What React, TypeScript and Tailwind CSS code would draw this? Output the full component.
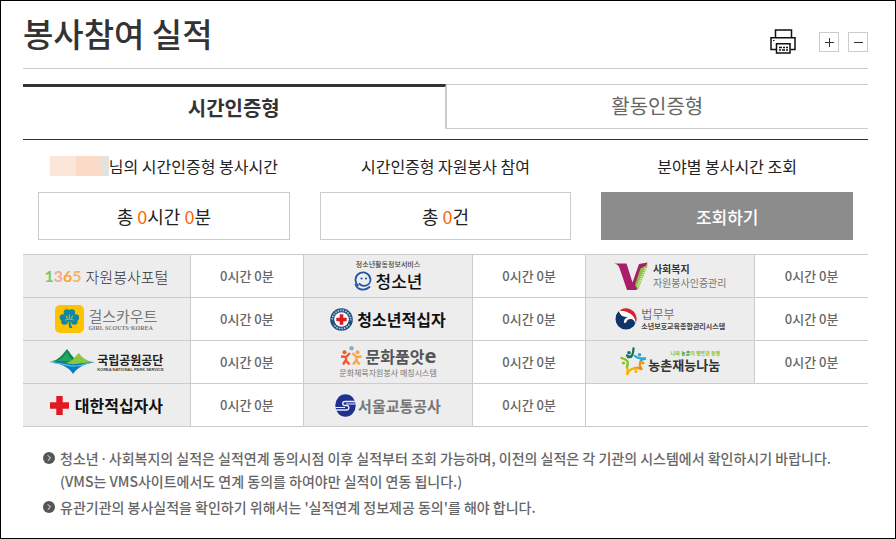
import type { ReactNode } from 'react';

function PrinterIcon() {
  return (
    <svg width="26" height="25" viewBox="0 0 26 25" fill="none" stroke="#111" strokeWidth="1.5" aria-hidden="true">
      <path d="M5.500 8.500V1h16v7.500" />
      <path d="M6 20.500H1V8.700h24v11.800h-4.500" />
      <path d="M6.500 14.700h13.500v9.300H6.500z" />
      <path d="M9 18.500h3M13 18.500h2M16 18.500h2M9 21h2M12 21h3M16 21h2" strokeWidth="1.300" />
      <path d="M3 11.500h1.500" strokeWidth="1.200" />
    </svg>
  );
}

function Portal1365() {
  return (
    <div className="flex items-center gap-1">
      <span className="flex font-['Lato','Noto_Sans_CJK_KR',sans-serif] text-[16px] leading-none font-bold">
        <span className="text-[#7cc85a]">1</span>
        <span className="text-[#f5a98c]">3</span>
        <span className="text-[#f8a53c]">6</span>
        <span className="text-[#f8b070]">5</span>
      </span>
      <span className="text-[15px] leading-none font-light text-[#333]">자원봉사포털</span>
    </div>
  );
}

function GirlScouts() {
  return (
    <div className="flex items-center gap-1">
      <svg width="29" height="28" viewBox="0 0 29 28" aria-hidden="true">
        <rect width="29" height="28" rx="5" fill="#fdc300" />
        <g fill="#0d87a3">
          <circle cx="12" cy="7.500" r="3.300" />
          <circle cx="16.800" cy="7.500" r="3.300" />
          <path d="M11 8h7l-3 8h-1z" />
          <circle cx="8" cy="12.500" r="3.300" />
          <circle cx="9.500" cy="16.500" r="3.300" />
          <circle cx="20.800" cy="12.500" r="3.300" />
          <circle cx="19.300" cy="16.500" r="3.300" />
          <path d="M8 11l6.500 3.500L21 11l-1 8-5.500-3L9 19z" />
          <path d="M13.700 15h1.700c0 3 .6 5.500 2.100 8h-3c-1-2.300-1-5-.8-8z" />
        </g>
        <path d="M14.400 14V9.500M14.400 14l-4.300 1M14.400 14l4.300 1" stroke="#fdc300" strokeWidth=".8" />
      </svg>
      <span className="flex flex-col items-start">
        <span className="text-[15px] leading-[18px] text-[#777]">걸스카우트</span>
        <span className="font-['Liberation_Serif',serif] text-[6px] leading-[7px] font-bold text-[#777]">GIRL SCOUTS·KOREA</span>
      </span>
    </div>
  );
}

function NationalPark() {
  return (
    <div className="flex items-center gap-0.5">
      <svg width="46" height="26" viewBox="0 0 46 26" aria-hidden="true">
        <path d="M3 12C10 11 14 5 18 0c3 4 5 7 8 10l-7 5z" fill="#078b4d" />
        <path d="M7 12c6-1 8-6 11-9 2 5 4 7 7 9z" fill="#27a568" />
        <path d="M15 14c8 0 11-7 15-10 3 5 8 8 15 9-9 3-20 4-30 1z" fill="#8cc63f" />
        <path d="M0 13c12-2 18 3 27 2 7-1 12-2 19-2-11 2-17 5-22 12-4-7-13-11-24-12z" fill="#087dbb" />
        <path d="M5 14c10 0 15 4 22 3 5 0 9-2 13-3" fill="none" stroke="#55c2df" strokeWidth="1.200" />
      </svg>
      <span className="flex flex-col items-start">
        <span className="text-[12px] leading-[15px] font-bold text-[#222]">국립공원공단</span>
        <span className="font-['Liberation_Sans',sans-serif] text-[4px] leading-[6px] font-bold text-[#444]">KOREA NATIONAL PARK SERVICE</span>
      </span>
    </div>
  );
}

function RedCross() {
  return (
    <div className="flex items-center gap-1.5">
      <svg width="19" height="19" viewBox="0 0 19 19" aria-hidden="true">
        <path d="M6.300 0h6.400v6.300H19v6.400h-6.300V19H6.300v-6.300H0V6.300h6.300z" fill="#e01a22" />
      </svg>
      <span className="text-[16px] leading-none font-bold text-[#111]">대한적십자사</span>
    </div>
  );
}

function Youth() {
  return (
    <div className="flex flex-col items-center">
      <span className="text-[7px] leading-[10px] font-medium text-[#444]">청소년활동정보서비스</span>
      <span className="flex items-center gap-1">
        <svg width="18" height="20" viewBox="0 0 18 20" fill="none" stroke="#2456a8" aria-hidden="true">
          <path d="M4 14.500A7.500 7.500 0 1 1 16.500 8.500c0 3.500-2.500 6-6 6.300-2.500.2-4-.8-5-2" strokeWidth="1.800" strokeLinecap="round" />
          <path d="M1.500 13.500c2 5.500 9 7 14 2.500" strokeWidth="1.800" strokeLinecap="round" />
          <circle cx="7.500" cy="7.500" r="1.100" fill="#2456a8" stroke="none" />
          <circle cx="12" cy="7.500" r="1.100" fill="#2456a8" stroke="none" />
        </svg>
        <span className="text-[17px] leading-6 font-medium text-[#111]">청소년</span>
      </span>
    </div>
  );
}

function YouthRedCross() {
  return (
    <div className="flex items-center gap-1">
      <svg width="23" height="23" viewBox="0 0 23 23" aria-hidden="true">
        <circle cx="11.500" cy="11.500" r="11.300" fill="#1b4f7f" />
        <circle cx="11.500" cy="11.500" r="9.200" fill="none" stroke="#b9cbdc" strokeWidth="1.700" strokeDasharray="1.500 1.100" />
        <path d="M2 12.500l1.300 4M21 12.500l-1.300 4" stroke="#1b4f7f" strokeWidth="3" />
        <circle cx="11.500" cy="11.500" r="7.300" fill="#fff" />
        <path d="M9.700 6.300h3.600v3.400h3.400v3.600h-3.400v3.400H9.700v-3.400H6.300V9.700h3.400z" fill="#e01a22" />
      </svg>
      <span className="text-[16px] leading-none font-bold text-[#111]">청소년적십자</span>
    </div>
  );
}

function CultureExchange() {
  return (
    <div className="flex flex-col items-center">
      <span className="flex items-center gap-1">
        <svg width="22" height="20" viewBox="0 0 22 20" aria-hidden="true">
          <circle cx="11.500" cy="2.300" r="2.200" fill="#7fb2c8" />
          <circle cx="4.500" cy="6.300" r="2" fill="#ee5a2b" />
          <circle cx="17.500" cy="6.300" r="2" fill="#f9a73e" />
          <path d="M1 10.500l5 .5 4-4M6 11.500v3l3.500 4M6 14l-3 4.500" fill="none" stroke="#ee5a2b" strokeWidth="2.400" />
          <path d="M21.500 10.500l-5 .5-4-4M16.500 11.500v3l3 4M16.500 14l-3.500 4.500" fill="none" stroke="#f9a73e" strokeWidth="2.400" />
        </svg>
        <span className="flex items-center text-[16px] leading-[22px] font-bold text-[#555]">
          문화품앗
          <span className="font-['Noto_Sans',sans-serif] text-[20px] leading-5 font-bold">e</span>
        </span>
      </span>
      <span className="text-[8px] leading-3 text-[#777]">문화체육자원봉사 매칭시스템</span>
    </div>
  );
}

function SeoulMetro() {
  return (
    <div className="flex items-center gap-0.5">
      <svg width="21" height="23" viewBox="0 0 21 23" aria-hidden="true">
        <ellipse cx="10.500" cy="11.500" rx="10.200" ry="11.200" fill="#1f3190" />
        <path d="M20.500 7.500H10c-3 0-3 4 0 4h2c2.500 0 2.500 4.500-.5 4.500H.8" fill="none" stroke="#ededed" strokeWidth="1.400" />
        <path d="M20.500 10H11M10 13.500H.5" stroke="#ededed" strokeWidth="1" />
      </svg>
      <span className="text-[15px] leading-none font-bold text-[#777]">서울교통공사</span>
    </div>
  );
}

function SocialWelfare() {
  return (
    <div className="flex items-center gap-1">
      <svg width="35" height="29" viewBox="0 0 35 29" aria-hidden="true">
        <path d="M0 1.500h12.500l6 19L25 2l8.500-1.500L22.500 28H13L5.500 6C4.500 3.500 3 2 0 1.500z" fill="#a81e6b" />
        <path d="M26.500 6.500L34 2.500 24 28l-3-5z" fill="#8cc63f" />
        <path d="M31.500 6L23.500 25" stroke="#d9edb8" strokeWidth="2" strokeDasharray="1.200 1" />
      </svg>
      <span className="flex flex-col items-start text-[10px] leading-[14px]">
        <span className="font-bold text-[#333]">사회복지</span>
        <span className="text-[#777]">자원봉사인증관리</span>
      </span>
    </div>
  );
}

function JusticeMinistry() {
  return (
    <div className="flex items-center gap-1">
      <svg width="22" height="22" viewBox="0 0 22 22" aria-hidden="true">
        <circle cx="11" cy="11" r="10.500" fill="#0f3568" />
        <path d="M3.500 3.600A10.500 10.500 0 0 1 21.500 11c0 2-.5 3.800-1.400 5.300 0-4.500-4-6.300-7-4.800-1.500.8-1 3-3 3.500C5.500 15.500 8 8 3.500 3.600z" fill="#fff" />
        <path d="M4.500 2.700A10.500 10.500 0 0 1 21.500 11c0 1.600-.3 3-.9 4.300C21 7.500 13 2.500 4.500 2.700z" fill="#d8232f" />
        <path d="M1 8.500C2 5.500 2.800 4.300 3.800 3.500c1.500 4.500 5 5.500 9.200 5.500-3 1-4.500 3-4 6.500z" fill="#0f3568" />
      </svg>
      <span className="flex flex-col items-start">
        <span className="text-[12px] leading-[14px] font-light text-[#333]">법무부</span>
        <span className="text-[7px] leading-[10px] font-bold text-[#444]">소년보호교육종합관리시스템</span>
      </span>
    </div>
  );
}

function RuralTalent() {
  return (
    <div className="flex items-center">
      <svg width="28" height="30" viewBox="0 0 28 30" fill="none" strokeLinecap="round" aria-hidden="true">
        <path d="M7 8.500c3 2.500 6 1.500 6.500-7M12.500 8c-1 2-2 2.500-4.500 2" stroke="#14735c" strokeWidth="2.300" />
        <circle cx="9" cy="5.700" r="1.800" fill="#14735c" />
        <path d="M15 9c3 3 7 2.500 11 2.500-3.500.5-5 1.500-5.500 3" stroke="#28a9d8" strokeWidth="2.300" />
        <circle cx="19.500" cy="7.800" r="1.800" fill="#28a9d8" />
        <path d="M21 14.500c-2 2-2 4 1 8-3-2-5-2.500-8-1" stroke="#f08c1e" strokeWidth="2.300" />
        <circle cx="23" cy="16" r="1.500" fill="#f08c1e" />
        <path d="M16 21.500c-4-.5-7 1-9 6.500 1-3.500 1-5.500 0-8" stroke="#f5b400" strokeWidth="2.300" />
        <circle cx="16" cy="24.500" r="1.500" fill="#f5b400" />
        <path d="M1.500 11c6 1.500 7.500 3.500 5.500 9" stroke="#8cc220" strokeWidth="2.300" />
        <circle cx="3.500" cy="16" r="1.600" fill="#8cc220" />
      </svg>
      <span className="flex flex-col items-end pb-0.5">
        <span className="text-[5px] leading-[7px] font-bold text-[#8cc220]">
          나와 <span className="text-[#259b4b]">농촌</span>의 행복한 동행
        </span>
        <span className="text-[13px] leading-[18px] font-bold text-[#333]">농촌재능나눔</span>
      </span>
    </div>
  );
}

const rows: ReactNode[][] = [
  [<Portal1365 />, <Youth />, <SocialWelfare />],
  [<GirlScouts />, <YouthRedCross />, <JusticeMinistry />],
  [<NationalPark />, <CultureExchange />, <RuralTalent />],
  [<RedCross />, <SeoulMetro />],
];

function Bullet() {
  return (
    <svg className="mt-[5px] shrink-0" width="12" height="12" viewBox="0 0 12 12" aria-hidden="true">
      <circle cx="6" cy="6" r="6" fill="#555" />
      <path d="M4.800 3.300L7.500 6 4.800 8.700" fill="none" stroke="#fff" />
    </svg>
  );
}

function Summary({ title, children }: { title: ReactNode; children: ReactNode }) {
  return (
    <div className="px-[15px]">
      <h2 className="flex h-5 items-center justify-center text-[16px] leading-5 whitespace-nowrap text-[#222]">{title}</h2>
      <div className="mt-4 h-12">{children}</div>
    </div>
  );
}

function TotalBox({ children }: { children: ReactNode }) {
  return (
    <p className="flex h-full items-center justify-center border border-[#ccc] text-[18px] leading-none whitespace-pre text-[#222]">
      {children}
    </p>
  );
}

const zoomButton = 'flex size-5 items-center justify-center border border-[#ccc]';

export default function App() {
  return (
    <main className="min-h-screen border border-black bg-white pr-[27px] pl-[22px] font-['Noto_Sans_CJK_KR',sans-serif] text-[#333]">
      <header className="flex h-[68px] items-center justify-between border-b border-[#ccc]">
        <h1 className="pb-0.5 text-[33px] leading-none font-medium">봉사참여 실적</h1>
        <div className="flex items-center pt-3.5">
          <button type="button" aria-label="인쇄" className="mr-[23px]">
            <PrinterIcon />
          </button>
          <button type="button" aria-label="확대" className={`${zoomButton} mr-[9px]`}>
            <svg width="10" height="10" viewBox="0 0 10 10" stroke="#333" shapeRendering="crispEdges" aria-hidden="true">
              <path d="M1 5.500h9M5.500 1v9" />
            </svg>
          </button>
          <button type="button" aria-label="축소" className={zoomButton}>
            <svg width="10" height="10" viewBox="0 0 10 10" stroke="#333" shapeRendering="crispEdges" aria-hidden="true">
              <path d="M1 5.500h9" />
            </svg>
          </button>
        </div>
      </header>

      <div role="tablist" className="mt-[15px] grid h-[45px] grid-cols-2 text-[20px] leading-none">
        <button type="button" role="tab" aria-selected="true" className="border-t-3 border-r border-t-[#333] border-r-[#ccc] font-bold">
          시간인증형
        </button>
        <button
          type="button"
          role="tab"
          aria-selected="false"
          className="border border-r-0 border-[#ccc] pb-0.5 text-[#666]"
        >
          활동인증형
        </button>
      </div>

      <section className="mt-2.5 grid grid-cols-3 border-t border-[#333] pt-4">
        <Summary
          title={
            <>
              <span className="flex h-5" aria-hidden="true">
                <span className="w-[26px] bg-[#fce6d9]" />
                <span className="w-[26px] bg-[#fbdbc7]" />
                <span className="w-[7px] bg-[#e4e2df]" />
              </span>
              님의 시간인증형 봉사시간
            </>
          }
        >
          <TotalBox>
            총 <span className="text-[#f60]">0</span>시간 <span className="text-[#f60]">0</span>분
          </TotalBox>
        </Summary>
        <Summary title="시간인증형 자원봉사 참여">
          <TotalBox>
            총 <span className="text-[#f60]">0</span>건
          </TotalBox>
        </Summary>
        <Summary title="분야별 봉사시간 조회">
          <button type="button" className="h-full w-full bg-[#8c8c8c] text-[17px] leading-none font-medium text-white">
            조회하기
          </button>
        </Summary>
      </section>

      <table className="mt-3.5 w-full table-fixed border-collapse border-y border-[#ccc]">
        <colgroup>
          <col className="w-[19.8%]" />
          <col className="w-[13.4%]" />
          <col className="w-[20%]" />
          <col className="w-[13.4%]" />
          <col className="w-[20%]" />
          <col className="w-[13.4%]" />
        </colgroup>
        <tbody>
          {rows.map((logos, r) => (
            <tr key={r} className="h-[43px] border-b border-[#ccc]">
              {logos.map((logo, c) => [
                <th key={`logo${c}`} scope="row" className="border-r border-[#ccc] bg-[#ededed] p-0 font-normal">
                  <div className="flex h-[42px] items-center justify-center whitespace-nowrap">{logo}</div>
                </th>,
                <td
                  key={`time${c}`}
                  className="border-r border-[#ccc] p-0 pb-0.5 text-center text-[13px] leading-none font-medium text-[#666] last:border-r-0"
                >
                  0시간 0분
                </td>,
              ])}
              {logos.length < 3 && <td colSpan={2} className="border-l border-[#ccc] p-0" />}
            </tr>
          ))}
        </tbody>
      </table>

      <ul className="mt-5 flex flex-col gap-1 pl-5 text-[14px] leading-[22px] font-medium text-[#666]">
        <li className="flex gap-[5px]">
          <Bullet />
          <p>
            청소년 <span className="font-['Noto_Sans',sans-serif]">·</span> 사회복지의 실적은 실적연계 동의시점 이후 실적부터 조회
            가능하며, 이전의 실적은 각 기관의 시스템에서 확인하시기 바랍니다.
            <br />
            (VMS는 VMS사이트에서도 연계 동의를 하여야만 실적이 연동 됩니다.)
          </p>
        </li>
        <li className="flex gap-[5px]">
          <Bullet />
          <p>유관기관의 봉사실적을 확인하기 위해서는 '실적연계 정보제공 동의'를 해야 합니다.</p>
        </li>
      </ul>
    </main>
  );
}
